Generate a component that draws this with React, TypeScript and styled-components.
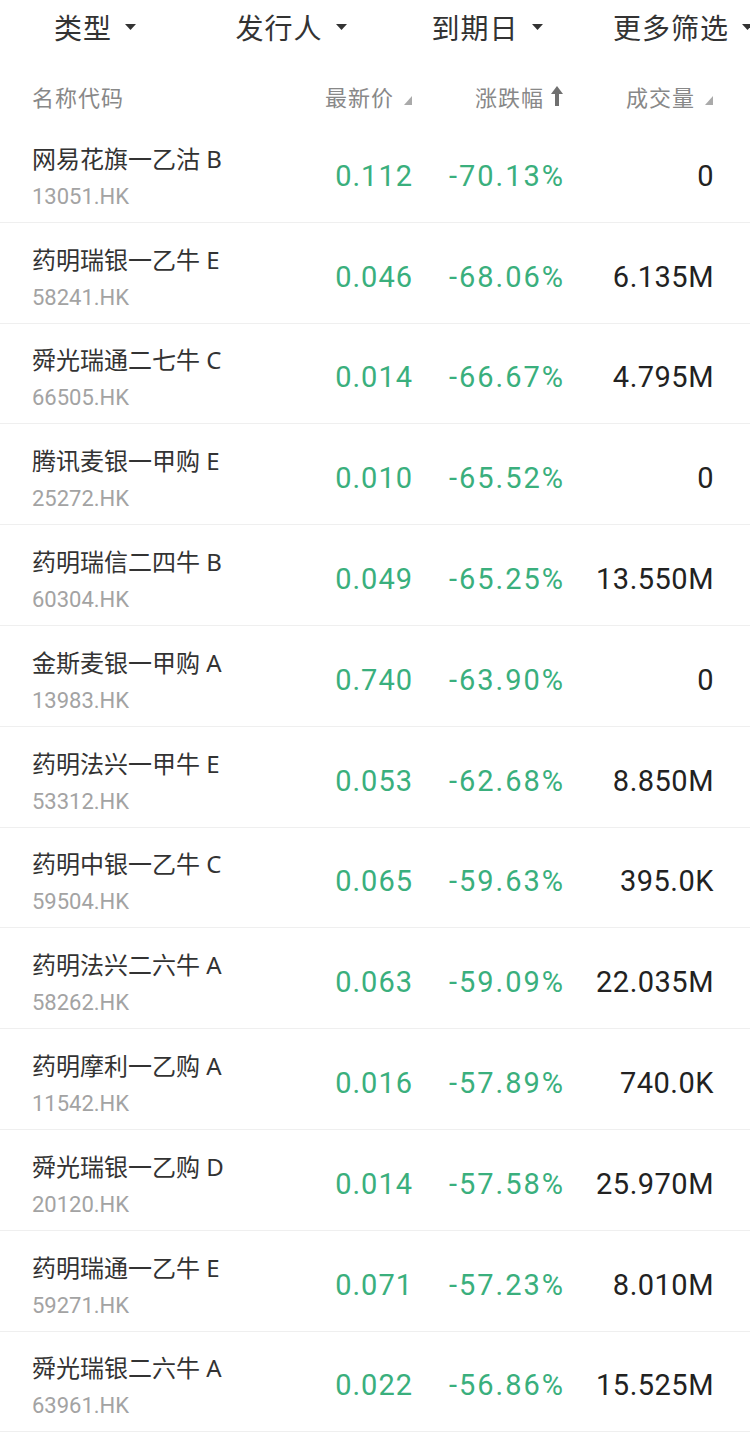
import React from "react";
import styled, { createGlobalStyle } from "styled-components";

interface Warrant {
    name: string;
    code: string;
    price: string;
    change: string;
    volume: string;
}

const rows: Warrant[] = [
    { name: "网易花旗一乙沽 B", code: "13051.HK", price: "0.112", change: "-70.13%", volume: "0" },
    { name: "药明瑞银一乙牛 E", code: "58241.HK", price: "0.046", change: "-68.06%", volume: "6.135M" },
    { name: "舜光瑞通二七牛 C", code: "66505.HK", price: "0.014", change: "-66.67%", volume: "4.795M" },
    { name: "腾讯麦银一甲购 E", code: "25272.HK", price: "0.010", change: "-65.52%", volume: "0" },
    { name: "药明瑞信二四牛 B", code: "60304.HK", price: "0.049", change: "-65.25%", volume: "13.550M" },
    { name: "金斯麦银一甲购 A", code: "13983.HK", price: "0.740", change: "-63.90%", volume: "0" },
    { name: "药明法兴一甲牛 E", code: "53312.HK", price: "0.053", change: "-62.68%", volume: "8.850M" },
    { name: "药明中银一乙牛 C", code: "59504.HK", price: "0.065", change: "-59.63%", volume: "395.0K" },
    { name: "药明法兴二六牛 A", code: "58262.HK", price: "0.063", change: "-59.09%", volume: "22.035M" },
    { name: "药明摩利一乙购 A", code: "11542.HK", price: "0.016", change: "-57.89%", volume: "740.0K" },
    { name: "舜光瑞银一乙购 D", code: "20120.HK", price: "0.014", change: "-57.58%", volume: "25.970M" },
    { name: "药明瑞通一乙牛 E", code: "59271.HK", price: "0.071", change: "-57.23%", volume: "8.010M" },
    { name: "舜光瑞银二六牛 A", code: "63961.HK", price: "0.022", change: "-56.86%", volume: "15.525M" },
];

const filters = ["类型", "发行人", "到期日", "更多筛选"];

const GlobalStyle = createGlobalStyle`
    body {
        margin: 0;
        background: #ffffff;
        font-family: "Noto Sans", "Noto Sans CJK SC", sans-serif;
    }
`;

// 下拉小三角
const Caret = () => (
    <svg width="11" height="7" viewBox="0 0 11 7">
        <path d="M0 0 H11 L5.5 6 Z" fill="#333" />
    </svg>
);

// 排序角标
const SortCorner = () => (
    <svg width="8" height="9" viewBox="0 0 8 9">
        <path d="M8 0 V9 H0 Z" fill="#aaa" />
    </svg>
);

const SortUp = () => (
    <svg width="12" height="20" viewBox="0 0 12 20">
        <path d="M6 0 L12 8 H8 V20 H4 V8 H0 Z" fill="#707070" />
    </svg>
);

export default function App() {
    return (
        <Page>
            <GlobalStyle />
            <FilterBar>
                {filters.map((f) => (
                    <FilterItem key={f}>
                        {f}
                        <Caret />
                    </FilterItem>
                ))}
            </FilterBar>
            <HeaderRow>
                <NameHead>名称代码</NameHead>
                <NumHead>
                    最新价
                    <SortCorner />
                </NumHead>
                <NumHead $gap={7}>
                    涨跌幅
                    <SortUp />
                </NumHead>
                <NumHead>
                    成交量
                    <SortCorner />
                </NumHead>
            </HeaderRow>
            {rows.map((r) => (
                <Row key={r.code}>
                    <NameCell>
                        <Name>{r.name}</Name>
                        <Code>{r.code}</Code>
                    </NameCell>
                    <NumCell $green>{r.price}</NumCell>
                    <NumCell $green $wide>{r.change}</NumCell>
                    <NumCell>{r.volume}</NumCell>
                </Row>
            ))}
        </Page>
    );
}

const Page = styled.div`
    width: 750px;
    height: 1444px;
    overflow: hidden;
    background: #fff;
`;

// 顶部筛选栏
const FilterBar = styled.div`
    display: flex;
    box-sizing: border-box;
    height: 60px;
    padding-bottom: 6px;
    align-items: center;
    white-space: nowrap;
    margin-left: -3px;
`;

const FilterItem = styled.div`
    flex: 0 0 196px;
    display: flex;
    align-items: center;
    justify-content: center;
    gap: 13px;
    font-size: 28px;
    color: #333;
    letter-spacing: 1px;
`;

// 表头
const HeaderRow = styled.div`
    display: grid;
    grid-template-columns: 1fr 150px 151px 150px;
    align-items: center;
    box-sizing: border-box;
    height: 62px;
    padding: 10px 37px 0 32px;
    font-size: 22px;
    color: #888;
`;

const NameHead = styled.div`
    letter-spacing: 1px;
`;

const NumHead = styled.div<{ $gap?: number }>`
    display: flex;
    align-items: center;
    justify-content: flex-end;
    gap: ${(p) => p.$gap ?? 10}px;
    letter-spacing: 1px;
    svg {
        margin-top: ${(p) => (p.$gap ? 0 : 8)}px;
    }
`;

// 数据行
const Row = styled.div`
    display: grid;
    grid-template-columns: 1fr 150px 151px 150px;
    align-items: center;
    box-sizing: border-box;
    height: 100.8px;
    padding: 0 37px 0 32px;
    border-bottom: 1px solid #efefef;
`;

const NameCell = styled.div`
    display: flex;
    flex-direction: column;
    gap: 8px;
    margin-top: 10px;
`;

const Name = styled.div`
    font-size: 24px;
    line-height: 32px;
    color: #333;
    white-space: nowrap;
`;

const Code = styled.div`
    font-family: Roboto, "Noto Sans", sans-serif;
    font-size: 22px;
    line-height: 28px;
    color: #a3a3a3;
`;

const NumCell = styled.div<{ $green?: boolean; $wide?: boolean }>`
    text-align: right;
    font-family: Roboto, "Noto Sans", sans-serif;
    font-size: 29px;
    margin-top: 8px;
    letter-spacing: ${(p) => (p.$wide ? 2 : p.$green ? 1 : 0.5)}px;
    color: ${(p) => (p.$green ? "#3aaf7d" : "#222")};
    margin-right: ${(p) => (p.$wide ? -2 : -1)}px;
`;
